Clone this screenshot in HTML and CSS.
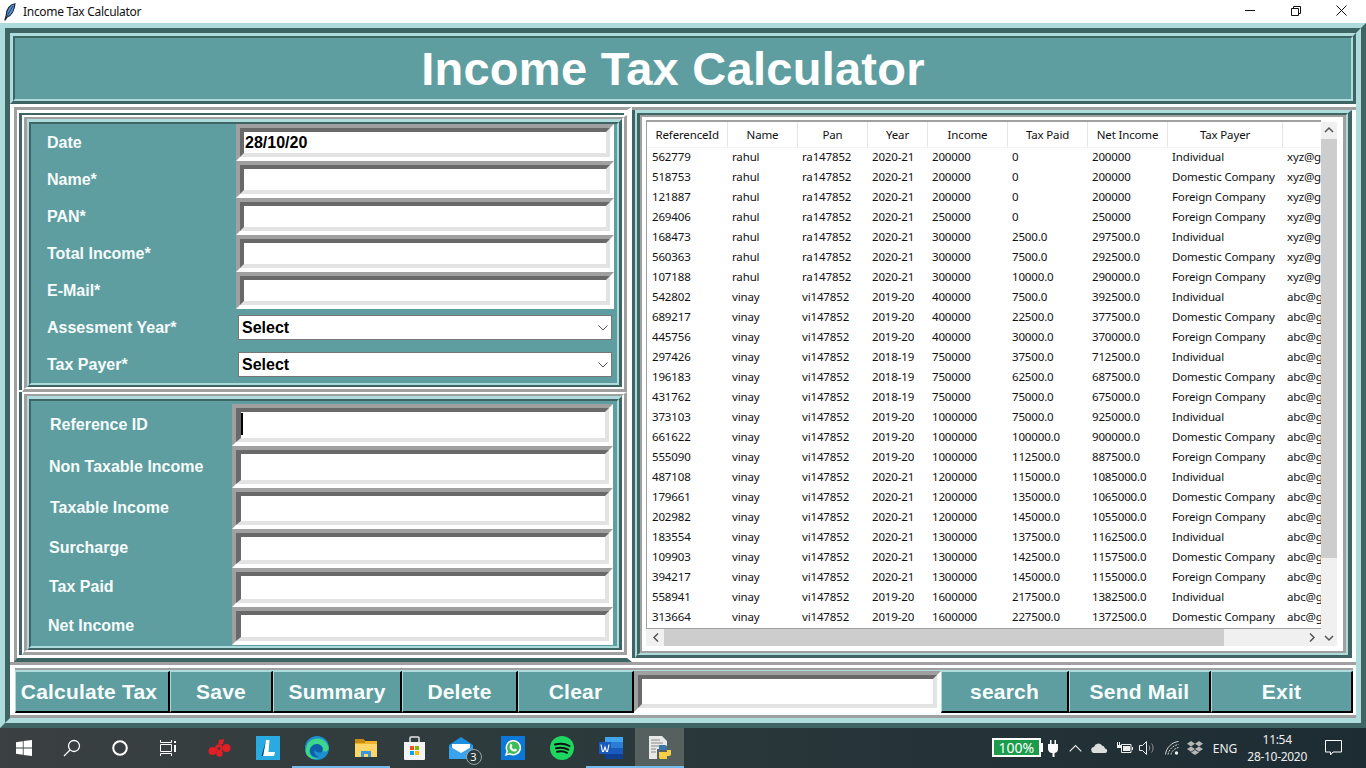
FILE: index.html
```html
<!DOCTYPE html>
<html lang="en">
<head>
<meta charset="utf-8">
<title>Income Tax Calculator</title>
<link rel="stylesheet" href="styles.css">
</head>
<body>
<div class="screen">
  <header class="titlebar">
    <svg class="feather" viewBox="0 0 12 18" width="12" height="18"><path d="M11 .8C6 1.500 2.500 6 2.300 12L.8 17.500 3.200 14C7.500 12.500 10.500 7 11 .8z" fill="#5b8fd0" stroke="#10243c" stroke-width="1.100"/><path d="M9 3L3 13" stroke="#10243c" stroke-width=".7"/></svg>
    <span class="apptitle">Income Tax Calculator</span>
    <div class="winctl">
      <svg viewBox="0 0 46 23" width="46" height="23"><path d="M18 10.500h10" stroke="#111" fill="none"/></svg>
      <svg viewBox="0 0 46 23" width="46" height="23"><path d="M18.500 8.500h7v7h-7zM20.500 8.500v-2h7v7h-2" stroke="#111" fill="none"/></svg>
      <svg viewBox="0 0 46 23" width="46" height="23"><path d="M17.500 5.500l10 10M27.500 5.500l-10 10" stroke="#111" fill="none"/></svg>
    </div>
  </header>

  <div class="win0"><div class="win1">
    <div class="title1"><h1 class="title2">Income Tax Calculator</h1></div>

    <div class="mid">
      <section class="leftpanel">
        <div class="g1 form1"><div class="g2"><div class="g3"><div class="g4">
          <div class="rows7">
            <div class="row r37"><label class="lab">Date</label><div class="en1"><div class="en2 val">28/10/20</div></div></div>
            <div class="row r37"><label class="lab">Name*</label><div class="en1"><div class="en2"></div></div></div>
            <div class="row r37"><label class="lab">PAN*</label><div class="en1"><div class="en2"></div></div></div>
            <div class="row r37"><label class="lab">Total Income*</label><div class="en1"><div class="en2"></div></div></div>
            <div class="row r37"><label class="lab">E-Mail*</label><div class="en1"><div class="en2"></div></div></div>
            <div class="row r37"><label class="lab">Assesment Year*</label><div class="combo"><span>Select</span><svg width="10" height="6" viewBox="0 0 10 6"><path d="M.5.500L5 5 9.500.500" fill="none" stroke="#555"/></svg></div></div>
            <div class="row r37"><label class="lab">Tax Payer*</label><div class="combo"><span>Select</span><svg width="10" height="6" viewBox="0 0 10 6"><path d="M.5.500L5 5 9.500.500" fill="none" stroke="#555"/></svg></div></div>
          </div>
        </div></div></div></div>

        <div class="g1 form2"><div class="g2"><div class="g3"><div class="g4">
          <div class="rows6">
            <div class="row h42"><label class="lab2 p19">Reference ID</label><div class="en1 wide"><div class="en2"><i class="caret"></i></div></div></div>
            <div class="row h42"><label class="lab2 p18">Non Taxable Income</label><div class="en1 wide"><div class="en2"></div></div></div>
            <div class="row h41"><label class="lab2 p19 up1">Taxable Income</label><div class="en1 wide"><div class="en2"></div></div></div>
            <div class="row h39"><label class="lab2 p18 up1">Surcharge</label><div class="en1 wide"><div class="en2"></div></div></div>
            <div class="row h39"><label class="lab2 p18 up1">Tax Paid</label><div class="en1 wide"><div class="en2"></div></div></div>
            <div class="row h38"><label class="lab2 p17">Net Income</label><div class="en1 wide"><div class="en2"></div></div></div>
          </div>
        </div></div></div></div>
      </section>

      <section class="rightpanel"><div class="rp2"><div class="rp3"><div class="rp4"><div class="rp5">
        <div class="treewrap">
          <div class="treearea">
            <table class="tree">
              <colgroup><col class="c80"><col class="c70"><col class="c70"><col class="c60"><col class="c80"><col class="c80"><col class="c80"><col class="c115"><col class="c80"></colgroup>
              <thead><tr><th>ReferenceId</th><th>Name</th><th>Pan</th><th>Year</th><th>Income</th><th>Tax Paid</th><th>Net Income</th><th>Tax Payer</th><th></th></tr></thead>
              <tbody>
<tr><td>562779</td><td>rahul</td><td>ra147852</td><td>2020-21</td><td>200000</td><td>0</td><td>200000</td><td>Individual</td><td>xyz@gmail.com</td></tr>
<tr><td>518753</td><td>rahul</td><td>ra147852</td><td>2020-21</td><td>200000</td><td>0</td><td>200000</td><td>Domestic Company</td><td>xyz@gmail.com</td></tr>
<tr><td>121887</td><td>rahul</td><td>ra147852</td><td>2020-21</td><td>200000</td><td>0</td><td>200000</td><td>Foreign Company</td><td>xyz@gmail.com</td></tr>
<tr><td>269406</td><td>rahul</td><td>ra147852</td><td>2020-21</td><td>250000</td><td>0</td><td>250000</td><td>Foreign Company</td><td>xyz@gmail.com</td></tr>
<tr><td>168473</td><td>rahul</td><td>ra147852</td><td>2020-21</td><td>300000</td><td>2500.0</td><td>297500.0</td><td>Individual</td><td>xyz@gmail.com</td></tr>
<tr><td>560363</td><td>rahul</td><td>ra147852</td><td>2020-21</td><td>300000</td><td>7500.0</td><td>292500.0</td><td>Domestic Company</td><td>xyz@gmail.com</td></tr>
<tr><td>107188</td><td>rahul</td><td>ra147852</td><td>2020-21</td><td>300000</td><td>10000.0</td><td>290000.0</td><td>Foreign Company</td><td>xyz@gmail.com</td></tr>
<tr><td>542802</td><td>vinay</td><td>vi147852</td><td>2019-20</td><td>400000</td><td>7500.0</td><td>392500.0</td><td>Individual</td><td>abc@gmail.com</td></tr>
<tr><td>689217</td><td>vinay</td><td>vi147852</td><td>2019-20</td><td>400000</td><td>22500.0</td><td>377500.0</td><td>Domestic Company</td><td>abc@gmail.com</td></tr>
<tr><td>445756</td><td>vinay</td><td>vi147852</td><td>2019-20</td><td>400000</td><td>30000.0</td><td>370000.0</td><td>Foreign Company</td><td>abc@gmail.com</td></tr>
<tr><td>297426</td><td>vinay</td><td>vi147852</td><td>2018-19</td><td>750000</td><td>37500.0</td><td>712500.0</td><td>Individual</td><td>abc@gmail.com</td></tr>
<tr><td>196183</td><td>vinay</td><td>vi147852</td><td>2018-19</td><td>750000</td><td>62500.0</td><td>687500.0</td><td>Domestic Company</td><td>abc@gmail.com</td></tr>
<tr><td>431762</td><td>vinay</td><td>vi147852</td><td>2018-19</td><td>750000</td><td>75000.0</td><td>675000.0</td><td>Foreign Company</td><td>abc@gmail.com</td></tr>
<tr><td>373103</td><td>vinay</td><td>vi147852</td><td>2019-20</td><td>1000000</td><td>75000.0</td><td>925000.0</td><td>Individual</td><td>abc@gmail.com</td></tr>
<tr><td>661622</td><td>vinay</td><td>vi147852</td><td>2019-20</td><td>1000000</td><td>100000.0</td><td>900000.0</td><td>Domestic Company</td><td>abc@gmail.com</td></tr>
<tr><td>555090</td><td>vinay</td><td>vi147852</td><td>2019-20</td><td>1000000</td><td>112500.0</td><td>887500.0</td><td>Foreign Company</td><td>abc@gmail.com</td></tr>
<tr><td>487108</td><td>vinay</td><td>vi147852</td><td>2020-21</td><td>1200000</td><td>115000.0</td><td>1085000.0</td><td>Individual</td><td>abc@gmail.com</td></tr>
<tr><td>179661</td><td>vinay</td><td>vi147852</td><td>2020-21</td><td>1200000</td><td>135000.0</td><td>1065000.0</td><td>Domestic Company</td><td>abc@gmail.com</td></tr>
<tr><td>202982</td><td>vinay</td><td>vi147852</td><td>2020-21</td><td>1200000</td><td>145000.0</td><td>1055000.0</td><td>Foreign Company</td><td>abc@gmail.com</td></tr>
<tr><td>183554</td><td>vinay</td><td>vi147852</td><td>2020-21</td><td>1300000</td><td>137500.0</td><td>1162500.0</td><td>Individual</td><td>abc@gmail.com</td></tr>
<tr><td>109903</td><td>vinay</td><td>vi147852</td><td>2020-21</td><td>1300000</td><td>142500.0</td><td>1157500.0</td><td>Domestic Company</td><td>abc@gmail.com</td></tr>
<tr><td>394217</td><td>vinay</td><td>vi147852</td><td>2020-21</td><td>1300000</td><td>145000.0</td><td>1155000.0</td><td>Foreign Company</td><td>abc@gmail.com</td></tr>
<tr><td>558941</td><td>vinay</td><td>vi147852</td><td>2019-20</td><td>1600000</td><td>217500.0</td><td>1382500.0</td><td>Individual</td><td>abc@gmail.com</td></tr>
<tr><td>313664</td><td>vinay</td><td>vi147852</td><td>2019-20</td><td>1600000</td><td>227500.0</td><td>1372500.0</td><td>Domestic Company</td><td>abc@gmail.com</td></tr>
              </tbody>
            </table>
          </div>
          <div class="vbar">
            <svg width="16" height="17" viewBox="0 0 16 17"><path d="M4 10l4-4 4 4" fill="none" stroke="#555" stroke-width="1.500"/></svg>
            <div class="vthumb"></div>
            <svg class="vdown" width="16" height="17" viewBox="0 0 16 17"><path d="M4 7l4 4 4-4" fill="none" stroke="#555" stroke-width="1.500"/></svg>
          </div>
          <div class="hbar">
            <svg class="hleft" width="17" height="17" viewBox="0 0 17 17"><path d="M11 4.500l-4 4 4 4" fill="none" stroke="#555" stroke-width="1.500"/></svg>
            <div class="hthumb"></div>
            <svg class="hright" width="17" height="17" viewBox="0 0 17 17"><path d="M6 4.500l4 4-4 4" fill="none" stroke="#555" stroke-width="1.500"/></svg>
          </div>
        </div>
      </div></div></div></div></section>
    </div>

    <footer class="bottom"><div class="bottom2"><div class="bottom3">
      <button class="btn w155">Calculate Tax</button>
      <button class="btn w103">Save</button>
      <button class="btn w129">Summary</button>
      <button class="btn w116">Delete</button>
      <button class="btn w116">Clear</button>
      <div class="en1 search"><div class="en2"></div></div>
      <button class="btn w128">search</button>
      <button class="btn w142">Send Mail</button>
      <button class="btn w142">Exit</button>
    </div></div></footer>
  </div></div>

  <nav class="taskbar">
    <div class="slot">
      <svg width="16" height="16" viewBox="0 0 16 16"><path d="M0 2.300l6.800-1v6.300H0zM7.600 1.100L16 0v7.600H7.600zM0 8.400h6.800v6.300l-6.800-1zM7.600 8.400H16V16l-8.400-1.100z" fill="#fff"/></svg>
    </div>
    <div class="slot">
      <svg width="18" height="18" viewBox="0 0 18 18"><circle cx="11" cy="7" r="5.500" fill="none" stroke="#fff" stroke-width="1.300"/><path d="M7 11l-6 6" stroke="#fff" stroke-width="1.300"/></svg>
    </div>
    <div class="slot">
      <svg width="16" height="16" viewBox="0 0 16 16"><circle cx="8" cy="8" r="6.800" fill="none" stroke="#fff" stroke-width="2"/></svg>
    </div>
    <div class="slot">
      <svg width="17" height="16" viewBox="0 0 17 16"><path d="M.5 0v2.500h11V0M.5 16v-2.500h11V16M.5 4.500h11v7H.5z" fill="none" stroke="#fff"/><path d="M14 1h2v2h-2zM14 5h2v7h-2z" fill="#fff"/></svg>
    </div>
    <div class="gap3"></div>
    <div class="slot">
      <svg width="23" height="18" viewBox="0 0 23 18"><g fill="#e21f26"><circle cx="4.500" cy="12" r="4"/><circle cx="11" cy="9" r="3.800"/><circle cx="18.500" cy="9" r="4"/><circle cx="11.500" cy="14.500" r="3.200"/><path d="M11 1l5-1-1 5-5 1z"/></g><circle cx="11" cy="9.500" r="1.300" fill="#2c3a3c"/></svg>
    </div>
    <div class="slot s49">
      <svg width="24" height="24" viewBox="0 0 24 24"><rect width="24" height="24" fill="#29abe2"/><path d="M10 4h3.500l-1 12H19l-1 4H7z" fill="#fff"/><path d="M10 4L7 20l-1.500 0z" fill="#123f7d"/></svg>
    </div>
    <div class="slot s49 open">
      <svg width="24" height="24" viewBox="0 0 24 24"><circle cx="12" cy="12" r="12" fill="#1b8fd0"/><path d="M2 9C5 1 20-1 23.500 11c.7 4-3 5-6 4.500 2-3-.5-7-5-7-5 0-8 3-8 7 0 4 4 7 9 7-7 2-13-2-13-8" fill="#3dd68c"/><path d="M5 15c0-4 3-7 7-7 4 0 7 4 5 8-2 1-7 1-7-3-2 3 0 7 4 8-5 1-9-2-9-6z" fill="#0f5fa6"/></svg>
    </div>
    <div class="slot s49 open">
      <svg width="22" height="20" viewBox="0 0 22 20"><path d="M0 1h8l2 2h12v16H0z" fill="#f0b429"/><path d="M0 1h8l2 2v2H0z" fill="#c98a12"/><path d="M0 6h22v13H0z" fill="#ffd768"/><path d="M6 19v-6h10v6h-3v-3H9v3z" fill="#3a96dd"/></svg>
    </div>
    <div class="slot s49">
      <svg width="23" height="24" viewBox="0 0 23 24"><path d="M1 6h21v17a1 1 0 0 1-1 1H2a1 1 0 0 1-1-1z" fill="#f3f3f3"/><path d="M7 6V2a1 1 0 0 1 1-1h7a1 1 0 0 1 1 1v4" fill="none" stroke="#e8e8e8" stroke-width="1.500"/><path d="M7 10h4v4H7z" fill="#f25022"/><path d="M12 10h4v4h-4z" fill="#7fba00"/><path d="M7 15h4v4H7z" fill="#00a4ef"/><path d="M12 15h4v4h-4z" fill="#ffb900"/></svg>
    </div>
    <div class="slot s49">
      <span class="mailwrap">
        <svg width="24" height="22" viewBox="0 0 24 22"><path d="M0 8L12 0l12 8v14H0z" fill="#1b8fe0"/><path d="M3 7h18v6l-9 5-9-5z" fill="#fff"/><path d="M0 9l12 7 12-7v13H0z" fill="#3aa3ee"/></svg>
        <b class="badge">3</b>
      </span>
    </div>
    <div class="slot s49">
      <svg width="24" height="24" viewBox="0 0 24 24"><rect width="24" height="24" fill="#0b78d7"/><path d="M5 19l1.200-4A7 7 0 1 1 9 17.800z" fill="#3dbb58" stroke="#fff" stroke-width="1.500"/><path d="M9.500 8c1-1 1.500 1 2 2l-1 1c.5 1 1.500 2 2.500 2.500l1-1c1 .5 2 1 2 1.500-1 2.500-4 1.500-5.500.5-2-1.500-2.500-3.500-1-6.500z" fill="#fff"/></svg>
    </div>
    <div class="slot s49">
      <svg width="24" height="24" viewBox="0 0 24 24"><circle cx="12" cy="12" r="12" fill="#1ed760"/><path d="M5 8.500c5-1.500 10-1 14.500 1.500M6 12.300c4.500-1.200 8.500-.8 12.300 1.300M7 15.800c3.500-.9 7-.6 10 1" fill="none" stroke="#111" stroke-width="2" stroke-linecap="round"/></svg>
    </div>
    <div class="slot s49 open">
      <svg width="24" height="24" viewBox="0 0 24 24"><path d="M6 1h18v22H6z" fill="#2b7cd3"/><path d="M6 1h18v5H6z" fill="#41a5ee"/><path d="M6 12h18v6H6z" fill="#185abd"/><path d="M6 18h18v5H6z" fill="#103f91"/><rect y="6" width="12" height="12" fill="#185abd"/><path d="M2 8.500l1.500 7h1L6 11l1.500 4.500h1l1.500-7" fill="none" stroke="#fff" stroke-width="1.100"/></svg>
    </div>
    <div class="slot s49 active">
      <svg width="24" height="24" viewBox="0 0 24 24"><path d="M1 0h13l5 5v8H9v10H1z" fill="#e8e8e8"/><path d="M3 4h9M3 7h12M3 10h12M3 13h5M3 16h5" stroke="#888"/><path d="M11 9h6a2 2 0 0 1 2 2v3h-6a2 2 0 0 0-2 2v-6z" fill="#3a76a8"/><path d="M11 16h8v-2h4v4a2 2 0 0 1-2 2h-2v3h-7a2 2 0 0 1-1-2z" fill="#f7cf47"/></svg>
    </div>

    <div class="tray">
      <div class="batt"><span class="battfill">100%</span><i class="battnub"></i></div>
      <svg class="t-plug" width="10" height="17" viewBox="0 0 10 17"><path d="M2 0h1.500v4h3V0H8v4h2v5a4 4 0 0 1-3.500 4V17h-2v-4A4 4 0 0 1 0 9V4h2z" fill="#fff"/></svg>
      <svg class="t-chev" width="13" height="8" viewBox="0 0 13 8"><path d="M.7 7.300L6.500 1.500l5.800 5.800" fill="none" stroke="#e6e6e6" stroke-width="1.200"/></svg>
      <svg class="t-cloud" width="17" height="10" viewBox="0 0 17 10"><path d="M3.500 10a3 3 0 0 1-.5-6 4.500 4.500 0 0 1 8-1.500A3.500 3.500 0 0 1 14 5.500 2.300 2.300 0 0 1 14.500 10z" fill="#ddd"/></svg>
      <svg class="t-batt" width="17" height="12" viewBox="0 0 17 12"><path d="M5.500 2.500h9.500v8H5.500z" fill="#1c282c" stroke="#eee"/><path d="M7 4h7v5H7z" fill="#eee"/><path d="M16 5h1v3h-1zM1 0h1v3h1V0h1v3h1v3H1z" fill="#eee"/></svg>
      <svg class="t-vol" width="16" height="14" viewBox="0 0 16 14"><path d="M.5 4.500h3l4-4v13l-4-4h-3z" fill="none" stroke="#eee"/><path d="M10 4.500c1 1.500 1 3.500 0 5M12.500 2.500c2 2.500 2 6.500 0 9" fill="none" stroke="#999"/></svg>
      <svg class="t-wifi" width="14" height="14" viewBox="0 0 14 14"><g fill="none" stroke="#d8d8d8"><path d="M.5 13.500C1 7 7 1 13.500.5"/><path d="M3 13.500C3.500 9 8.500 4 13.500 3.500" stroke-dasharray="2 1"/><path d="M6 13.500c.3-3 4-6.500 7.500-7" stroke-dasharray="2 1"/></g><circle cx="11.500" cy="12" r="1.700" fill="#eee"/></svg>
      <svg class="t-drop" width="16" height="14" viewBox="0 0 16 14"><path d="M4 0l4 2.700L4 5.400 0 2.700zM12 0l4 2.700-4 2.700L8 2.700zM4 5.400l4 2.700-4 2.700-4-2.700zM12 5.400l4 2.700-4 2.700-4-2.700zM4 11.500l4-2.500 4 2.500-4 2.500z" fill="#b6b6b6"/></svg>
      <span class="eng">ENG</span>
      <div class="clock"><span>11:54</span><span>28-10-2020</span></div>
      <svg class="t-note" width="17" height="16" viewBox="0 0 17 16"><path d="M.5.500h16v11.500H8L5.500 15v-3H.5z" fill="none" stroke="#fff"/></svg>
    </div>
  </nav>
</div>
</body>
</html>
```
FILE: styles.css
```css
* { box-sizing: border-box; }
html, body { margin: 0; padding: 0; }
body { width: 1366px; height: 768px; overflow: hidden; font-family: "Liberation Sans", Arial, sans-serif; }
.screen { width: 1366px; height: 768px; display: flex; flex-direction: column; }

/* window title bar */
.titlebar { height: 23px; background: #fff; display: flex; align-items: center; flex: none; }
.feather { margin-left: 4px; }
.apptitle { margin-left: 7px; font: 12px "Noto Sans", sans-serif; color: #111; letter-spacing: -.3px; }
.winctl { margin-left: auto; display: flex; margin-right: 1px; }

/* outer frame */
.win0 { flex: none; height: 705px; border: 5px solid; border-color: #aedcdc #3f6464 #3f6464 #aedcdc; }
.win1 { height: 695px; border: 5px solid; border-color: #3f6464 #aedcdc #aedcdc #3f6464; display: flex; flex-direction: column; }

.title1 { height: 71px; flex: none; border: solid; border-width: 3px; border-color: #aedcdc #3f6464 #3f6464 #aedcdc; }
.title2 { margin: 0; height: 65px; border: 2px solid; border-color: #3f6464 #aedcdc #aedcdc #3f6464; background: #5f9ea0; color: #fff;
  font: bold 47px/61px "Liberation Sans", sans-serif; text-align: center; letter-spacing: .27px; padding-right: 20px; }

/* middle */
.mid { height: 558px; flex: none; display: flex; border: solid; border-width: 3px 0 0 4px; border-color: #fff transparent transparent #fff; }
.leftpanel { width: 618px; flex: none; border: solid; border-width: 3px 5px 4px 3px; border-color: #a0a0a0 #fff #3f6464 #a0a0a0; display: flex; flex-direction: column;
  background: #fff; padding: 5px 0 0 2px; }
.g1 { flex: none; margin-left: 3px; border: solid; border-width: 2px 3px 3px 2px; border-color: #fff #a0a0a0 #a0a0a0 #fff; }
.g2 { height: 100%; border: solid; border-width: 2px 2px 2px 3px; border-color: #a0a0a0 #fff #fff #a0a0a0; }
.g3 { height: 100%; border: solid; border-width: 3px 3px 2px 2px; border-color: #aedcdc #3f6464 #3f6464 #aedcdc; }
.g4 { height: 100%; background: #5f9ea0; border: solid; border-width: 2px; border-color: #3f6464 #aedcdc #aedcdc #3f6464; }
.form1 { height: 277px; box-shadow: -3px -2px 0 #3f6464; }
.form2 { height: 263px; box-shadow: -3px 0 0 #3f6464; }

.row { display: flex; align-items: center; }
.r37 { height: 37px; }
.h42 { height: 42px; } .h41 { height: 41px; } .h39 { height: 39px; } .h38 { height: 38px; }
.rows6 { padding-top: 3px; }
.lab { width: 205px; flex: none; padding-left: 16px; color: #f6fcfc; font-weight: bold; font-size: 16px; }
.lab2 { width: 201px; flex: none; color: #f6fcfc; font-weight: bold; font-size: 16px; }
.p19 { padding-left: 19px; } .p18 { padding-left: 18px; } .p17 { padding-left: 17px; }
.up1 { margin-top: -2px; }

.en1 { width: 378px; height: 37px; border: 4px solid; border-color: #a0a0a0 #fff #fff #a0a0a0; flex: none; }
.en1.wide { width: 381px; height: 100%; }
.en2 { height: 100%; background: #fff; border: 4px solid; border-color: #696969 #e3e3e3 #e3e3e3 #696969; display: flex; align-items: center; }
.en1.wide .en2 { border-left-width: 5px; }
.val { font-size: 16px; font-weight: bold; color: #000; padding-left: 1px; }
.caret { display: block; width: 2px; height: 22px; background: #000; margin-top: -2px; }
.combo { width: 374px; height: 25px; margin-left: 2px; background: #fff; border: 1px solid #767676; display: flex; align-items: center; justify-content: space-between; padding: 0 3px; font-size: 16px; font-weight: bold; color: #000; }

/* right panel */
.rightpanel { flex: 1; display: flex; padding: 3px 4px 4px 0; background: linear-gradient(#a0a0a0 3px, #fff 3px); }
.rp2 { flex: 1; display: flex; border-left: 3px solid #3f6464; }
.rp3 { flex: 1; display: flex; border: solid; border-width: 3px 4px 3px 2px; border-color: #aedcdc #3f6464 #3f6464 #aedcdc; }
.rp4 { flex: 1; display: flex; border: solid; border-width: 2px 2px 2px 3px; border-color: #3f6464 #aedcdc #aedcdc #3f6464; }
.rp5 { flex: 1; display: flex; border: solid; border-width: 2px 3px 2px 2px; border-color: #a0a0a0; background: #fff; padding: 3px 0 0 4px; }

.treewrap { flex: none; display: grid; grid-template-columns: 675px 16px; grid-template-rows: 509px 17px; height: 526px; }
.treearea { overflow: hidden; background: #fff; border-top: 2px solid #a0a0a0; border-left: 1px solid #a0a0a0; border-bottom: 1px solid #a0a0a0; }
.tree { border-collapse: collapse; table-layout: fixed; width: 675px; font: 11.5px "Noto Sans", sans-serif; color: #111; letter-spacing: -.15px; }
.c80 { width: 80px; } .c70 { width: 70px; } .c60 { width: 60px; } .c115 { width: 115px; }
.tree th { height: 25px; font-weight: normal; text-align: center; padding: 0 0 0 1px; border-right: 1px solid #e5e5e5; border-bottom: 1px solid #f4f4f4; white-space: nowrap; overflow: hidden; }
.tree td { height: 20px; padding: 0 0 1px 5px; white-space: nowrap; overflow: hidden; }

.vbar { background: #f0f0f0; display: flex; flex-direction: column; grid-row: 1 / 3; grid-column: 2; margin-top: 2px; }
.vthumb { height: 419px; background: #cdcdcd; }
.vdown { margin-top: auto; }
.hbar { background: #f0f0f0; display: flex; align-items: center; }
.hleft { margin-left: 1px; }
.hthumb { width: 560px; height: 17px; background: #cdcdcd; }
.hright { margin-left: auto; }

/* bottom bar */
.bottom { height: 56px; flex: none; border: solid; border-width: 3px 0; border-color: #a0a0a0 transparent; background: #fff; padding-top: 3px; }
.bottom2 { height: 44px; padding: 0 3px 0 5px; }
.bottom3 { height: 44px; display: flex; border-top: 2px solid #a0a0a0; box-shadow: inset 0 1px 0 #aedcdc; padding-top: 1px; }
.btn { height: 42px; flex: none; background: #5f9ea0; color: #f8fdfd; border: solid; border-width: 1px 2px 2px 1px; border-color: #aedcdc #000 #000 #aedcdc; font: bold 21px "Liberation Sans", sans-serif; letter-spacing: .2px; padding: 0; }
.w155 { width: 155px; padding-right: 6px; } .w103 { width: 103px; } .w129 { width: 129px; } .w116 { width: 116px; } .w128 { width: 128px; } .w142 { width: 142px; }
.en1.search { width: 307px; height: 41px; }

/* taskbar */
.taskbar { flex: none; height: 40px; display: flex; background: linear-gradient(90deg, #3b4041 0, #2c3a3c 40%, #1d2c33 100%); color: #fff; }
.slot { width: 48px; height: 40px; flex: none; display: flex; align-items: center; justify-content: center; }
.s49 { width: 49px; }
.gap3 { width: 3px; flex: none; }
.open { box-shadow: inset 0 -2px 0 #76b9ed; }
.active { background: #55605f; box-shadow: inset 0 -2px 0 #76b9ed; }
.mailwrap { position: relative; display: block; width: 24px; height: 22px; margin-left: -6px; }
.badge { position: absolute; right: -9px; bottom: -6px; width: 16px; height: 16px; border-radius: 50%; background: #2b3a3d; border: 1px solid #9aa5a8; color: #fff; font: 11px/14px "Noto Sans", sans-serif; text-align: center; }

.tray { margin-left: auto; display: flex; align-items: center; padding-right: 24px; }
.batt { width: 49px; height: 19px; border: 2px solid #fff; background: #fff; position: relative; margin-top: -1px; }
.battfill { display: block; height: 15px; border: 1px solid #1a9c4a; background: #1a9c4a; color: #fff; font: 14px/13px "Noto Sans", sans-serif; text-align: center; }
.battnub { position: absolute; right: -4px; top: 3px; width: 2px; height: 9px; background: #fff; }
.t-plug { margin-left: 7px; }
.t-chev { margin-left: 11px; }
.t-cloud { margin-left: 9px; }
.t-batt { margin-left: 8px; }
.t-vol { margin-left: 6px; }
.t-wifi { margin-left: 10px; }
.t-drop { margin-left: 8px; }
.eng { margin-left: 10px; font: 12px "Noto Sans", sans-serif; color: #eee; }
.clock { margin-left: 10px; display: flex; flex-direction: column; align-items: center; font: 12px/17px "Noto Sans", sans-serif; color: #eee; letter-spacing: -.3px; }
.t-note { margin-left: 18px; }
```
